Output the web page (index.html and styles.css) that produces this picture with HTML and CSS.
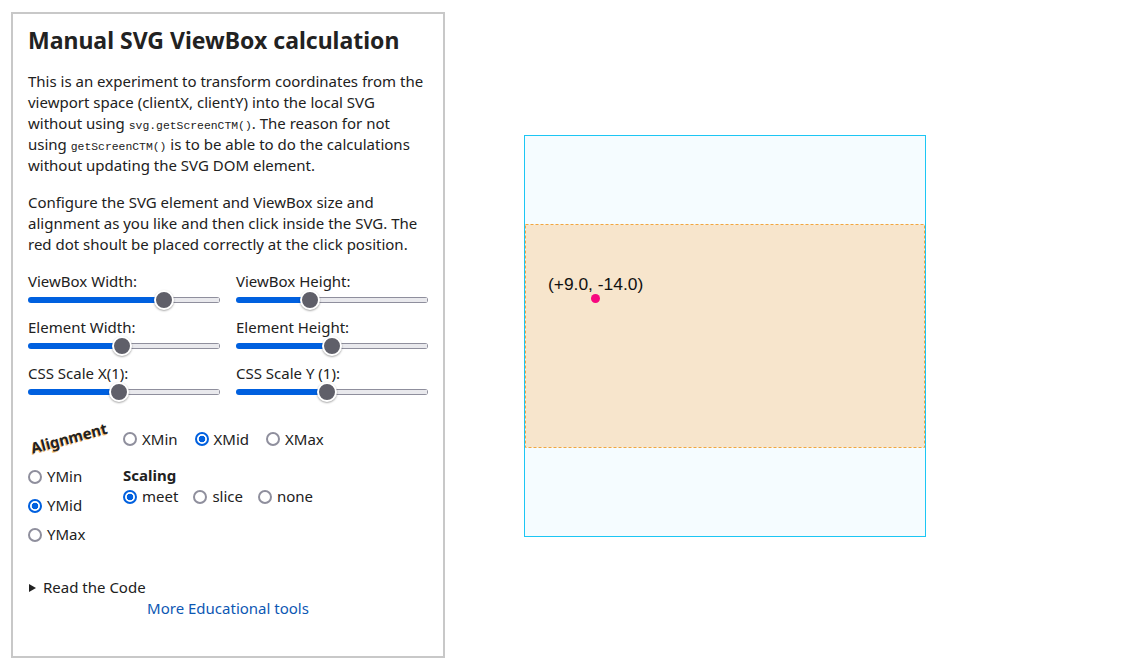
FILE: index.html
```html
<!DOCTYPE html>
<html lang="en">
<head>
<meta charset="utf-8">
<title>Manual SVG ViewBox calculation</title>
<link rel="stylesheet" href="styles.css">
</head>
<body>
<main class="page">
  <section class="panel">
    <h1 class="title">Manual SVG ViewBox calculation</h1>
    <p class="text">This is an experiment to transform coordinates from the viewport space (clientX, clientY) into the local SVG without using <code class="code">svg.getScreenCTM()</code>. The reason for not using <code class="code">getScreenCTM()</code> is to be able to do the calculations without updating the SVG DOM element.</p>
    <p class="text">Configure the SVG element and ViewBox size and alignment as you like and then click inside the SVG. The red dot shoult be placed correctly at the click position.</p>

    <div class="sliders">
      <label class="field"><span class="field-label">ViewBox Width:</span><input class="range" type="range" min="0" max="100" value="72.7" style="--v:0.727"></label>
      <label class="field"><span class="field-label">ViewBox Height:</span><input class="range" type="range" min="0" max="100" value="36.6" style="--v:0.366"></label>
      <label class="field"><span class="field-label">Element Width:</span><input class="range" type="range" min="0" max="100" value="48.8" style="--v:0.488"></label>
      <label class="field"><span class="field-label">Element Height:</span><input class="range" type="range" min="0" max="100" value="50" style="--v:0.5"></label>
      <label class="field"><span class="field-label">CSS Scale X(1):</span><input class="range" type="range" min="0" max="100" value="46.5" style="--v:0.465"></label>
      <label class="field"><span class="field-label">CSS Scale Y (1):</span><input class="range" type="range" min="0" max="100" value="46.9" style="--v:0.469"></label>
    </div>

    <div class="align">
      <div class="align-title">Alignment</div>
      <div class="xrow">
        <label class="opt"><input class="radio" type="radio" name="ax">XMin</label>
        <label class="opt"><input class="radio" type="radio" name="ax" checked>XMid</label>
        <label class="opt"><input class="radio" type="radio" name="ax">XMax</label>
      </div>
      <div class="ycol">
        <label class="opt"><input class="radio" type="radio" name="ay">YMin</label>
        <label class="opt"><input class="radio" type="radio" name="ay" checked>YMid</label>
        <label class="opt"><input class="radio" type="radio" name="ay">YMax</label>
      </div>
      <div class="scaling">
        <div class="scaling-title">Scaling</div>
        <div class="srow">
          <label class="opt"><input class="radio" type="radio" name="sc" checked>meet</label>
          <label class="opt"><input class="radio" type="radio" name="sc">slice</label>
          <label class="opt"><input class="radio" type="radio" name="sc">none</label>
        </div>
      </div>
    </div>

    <details class="code-block"><summary class="summary">Read the Code</summary></details>
    <div class="more-row"><a class="more" href="#">More Educational tools</a></div>
  </section>

  <div class="stage">
    <svg class="canvas" width="400" height="400" viewBox="0 0 400 400" xmlns="http://www.w3.org/2000/svg">
      <rect x="0.5" y="88.5" width="399" height="223" fill="#f7e5cc" stroke="#f2a640" stroke-width="1" stroke-dasharray="3 2"/>
      <text x="23" y="154" class="coord">(+9.0, -14.0)</text>
      <circle cx="70.5" cy="162.5" r="4.5" fill="#f7077f"/>
    </svg>
  </div>
</main>
</body>
</html>
```

FILE: styles.css
```css
* { box-sizing: border-box; }

html, body {
  margin: 0;
  padding: 0;
  background: #fff;
}

body {
  font-family: "Noto Sans", "Open Sans", sans-serif;
  font-size: 15px;
  color: #212121;
}

.page {
  display: flex;
  align-items: center;
  padding: 12px 0 0 11px;
}

.panel {
  width: 434px;
  height: 646px;
  border: 2px solid #c8c8c8;
  padding: 10px 15px 0 15px;
  display: flex;
  flex-direction: column;
}

.title {
  margin: 0 0 15px;
  font-size: 23px;
  line-height: 32px;
  font-weight: 700;
  color: #222;
}

.text {
  margin: 0 0 16px;
  line-height: 21px;
}

.code {
  font-family: "Liberation Mono", "DejaVu Sans Mono", monospace;
  font-size: 11.4px;
  line-height: 1;
}

.sliders {
  display: grid;
  grid-template-columns: 1fr 1fr;
  column-gap: 16px;
  row-gap: 8px;
}

.field {
  display: flex;
  flex-direction: column;
}

.field-label {
  line-height: 20px;
}

.range {
  -webkit-appearance: none;
  appearance: none;
  width: 100%;
  height: 18px;
  margin: 0;
  background: transparent;
}

.range::-webkit-slider-runnable-track {
  height: 6px;
  border-radius: 3px;
  background:
    linear-gradient(#0060df, #0060df) 0 0 / calc(10px + (100% - 20px) * var(--v)) 100% no-repeat,
    linear-gradient(#e9e9ed, #e9e9ed) 1px 1px / calc(100% - 2px) calc(100% - 2px) no-repeat,
    #8f8f9d;
}

.range::-webkit-slider-thumb {
  -webkit-appearance: none;
  appearance: none;
  width: 20px;
  height: 20px;
  margin-top: -7px;
  border-radius: 50%;
  background: #5f5f69;
  border: 2px solid #fff;
  box-shadow: 0 1px 2px rgba(0, 0, 0, 0.35);
}

.align {
  display: grid;
  grid-template-columns: 95px 1fr;
  grid-template-rows: 22px auto;
  row-gap: 16px;
  margin-top: 27px;
}

.align-title {
  font-weight: 700;
  font-size: 15px;
  line-height: 22px;
  transform: rotate(-15deg) translate(2px, -1px);
  transform-origin: 40px 11px;
  text-shadow: -1px 1px 0 rgba(244, 166, 58, 0.7);
  white-space: nowrap;
  color: #222;
}

.xrow, .srow {
  display: flex;
  align-items: center;
}

.xrow { gap: 17px; }
.srow { gap: 15px; }

.ycol {
  display: flex;
  flex-direction: column;
  gap: 8px;
}

.opt {
  display: inline-flex;
  align-items: center;
  gap: 5px;
  line-height: 21px;
}

.radio {
  -webkit-appearance: none;
  appearance: none;
  width: 14px;
  height: 14px;
  margin: 0;
  border: 2px solid #8f8f9d;
  border-radius: 50%;
  background: #fff;
  flex: none;
}

.radio:checked {
  border-color: #0060df;
  background: radial-gradient(circle, #0060df 0 3px, #fff 3.6px);
}

.scaling-title {
  font-weight: 700;
  line-height: 21px;
  margin-top: -1px;
}

.code-block {
  margin-top: 32px;
}

.summary {
  list-style: none;
  display: flex;
  align-items: center;
  line-height: 21px;
  cursor: pointer;
}

.summary::-webkit-details-marker { display: none; }

.summary::before {
  content: "";
  width: 0;
  height: 0;
  border-top: 4px solid transparent;
  border-bottom: 4px solid transparent;
  border-left: 7px solid #222;
  margin: 0 7px 0 1px;
}

.more-row {
  text-align: center;
  line-height: 21px;
}

.more {
  color: #0d57b3;
  text-decoration: none;
}

.stage {
  margin-left: 79px;
  margin-top: 1px;
  display: flex;
}

.canvas {
  display: block;
  width: 402px;
  height: 402px;
  border: 1px solid #1cc6f4;
  background: #f5fcff;
}

.coord {
  font-family: "Liberation Sans", Arial, sans-serif;
  font-size: 17.4px;
  fill: #111;
}
```
